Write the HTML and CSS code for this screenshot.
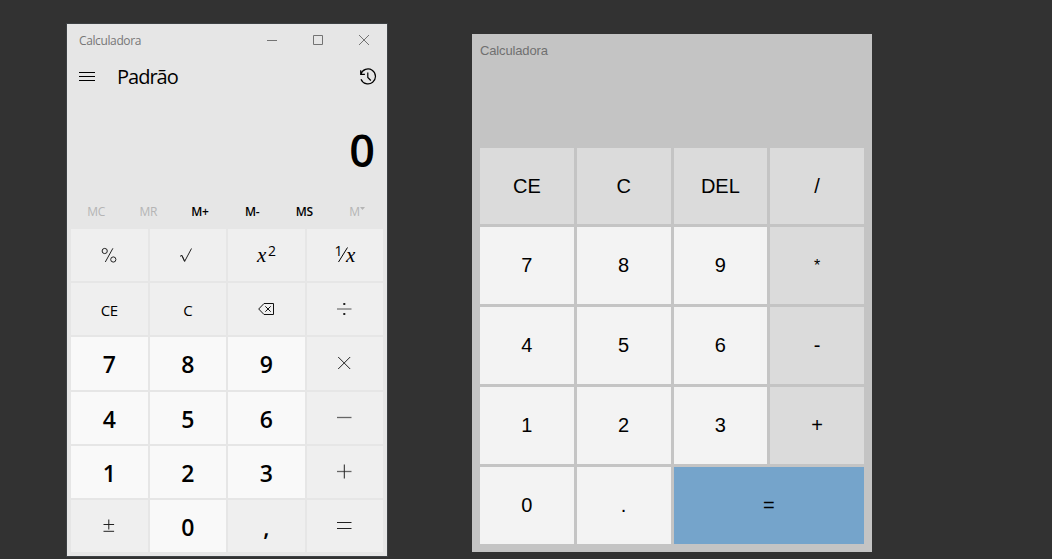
FILE: index.html
```html
<!DOCTYPE html>
<html lang="pt-BR">
<head>
<meta charset="utf-8">
<title>Calculadora</title>
<link rel="stylesheet" href="styles.css">
</head>
<body>
<main class="desktop">
  <section class="win">
    <header class="titlebar">
      <span class="caption">Calculadora</span>
      <div class="controls">
        <svg class="control" viewBox="0 0 46 33"><path d="M18 16.500h10"/></svg>
        <svg class="control" viewBox="0 0 46 33"><path d="M18.500 11.500h9v9h-9z"/></svg>
        <svg class="control" viewBox="0 0 46 33"><path d="M18 11l10 10M28 11l-10 10"/></svg>
      </div>
    </header>
    <div class="mode">
      <svg class="menu" viewBox="0 0 16 10"><path d="M0 .5h16M0 4.500h16M0 8.500h16"/></svg>
      <h1 class="mode-name">Padrão</h1>
      <svg class="history" viewBox="0 0 18 18"><path d="M1.800 6.200A7.500 7.500 0 1 1 2 11.200M1.700 2.200v4.100h4.200M8.800 4.500v5l3 3"/></svg>
    </div>
    <div class="display">0</div>
    <div class="memory">
      <span class="mem off">MC</span><span class="mem off">MR</span><span class="mem">M+</span><span class="mem">M-</span><span class="mem">MS</span><span class="mem off">M<svg class="tick" viewBox="0 0 5 3"><path d="M0 0h5L2.500 3z"/></svg></span>
    </div>
    <div class="pad">
      <div class="key"><svg class="icon" viewBox="0 0 24 24"><circle cx="7.700" cy="7" r="2.600"/><circle cx="16.300" cy="15.500" r="2.600"/><path d="M15.900 4.300L8.300 18"/></svg></div>
      <div class="key"><svg class="icon" viewBox="0 0 24 24"><path d="M5 12.300l2-1 2.700 6L16.500 4.500"/><path d="M6.900 11.800l2.700 5.700"/></svg></div>
      <div class="key"><span class="power"><i class="var">x</i><span class="exp">2</span></span></div>
      <div class="key"><span class="fraction"><span class="one">1</span><svg class="slash" viewBox="0 0 10 16"><path d="M9.500 .5L.5 15"/></svg><i class="var">x</i></span></div>

      <div class="key">CE</div>
      <div class="key">C</div>
      <div class="key"><svg class="icon erase" viewBox="0 0 24 24"><path d="M10 5.500h9.500v11H10L4.700 11z"/><path d="M11.300 8.300l5.400 5.400M16.700 8.300l-5.400 5.400"/></svg></div>
      <div class="key"><svg class="icon" viewBox="0 0 24 24"><path class="mid" d="M5 11h14.500"/><path class="dot" d="M11.300 5h2v2h-2zM11.300 15h2v2h-2z"/></svg></div>

      <div class="key num">7</div><div class="key num">8</div><div class="key num">9</div>
      <div class="key"><svg class="icon" viewBox="0 0 24 24"><path d="M6.200 5l12 12M18.200 5l-12 12"/></svg></div>

      <div class="key num">4</div><div class="key num">5</div><div class="key num">6</div>
      <div class="key"><svg class="icon" viewBox="0 0 24 24"><path class="thick" d="M5 10.500h14.500"/></svg></div>

      <div class="key num">1</div><div class="key num">2</div><div class="key num">3</div>
      <div class="key"><svg class="icon" viewBox="0 0 24 24"><path class="thick" d="M5 10.500h14.500"/><path d="M12.300 3.500v14"/></svg></div>

      <div class="key"><svg class="icon" viewBox="0 0 24 24"><path d="M6.500 9.500h10.600M11.800 4.500v10M6.500 16.300h10.600"/></svg></div>
      <div class="key num">0</div>
      <div class="key comma">,</div>
      <div class="key"><svg class="icon" viewBox="0 0 24 24"><path d="M5 7.500h14.500M5 13.500h14.500"/></svg></div>
    </div>
  </section>

  <section class="flat">
    <h2 class="flat-title">Calculadora</h2>
    <div class="grid">
      <div class="btn op">CE</div><div class="btn op">C</div><div class="btn op">DEL</div><div class="btn op">/</div>
      <div class="btn">7</div><div class="btn">8</div><div class="btn">9</div><div class="btn op star">*</div>
      <div class="btn">4</div><div class="btn">5</div><div class="btn">6</div><div class="btn op">-</div>
      <div class="btn">1</div><div class="btn">2</div><div class="btn">3</div><div class="btn op">+</div>
      <div class="btn">0</div><div class="btn">.</div><div class="btn equals">=</div>
    </div>
  </section>
</main>
</body>
</html>
```

FILE: styles.css
```css
* { box-sizing: border-box; }
body { margin: 0; background: #323232; overflow: hidden; }
svg { display: block; fill: none; stroke: #000; }
.desktop {
  display: flex;
  align-items: flex-start;
  gap: 85px;
  width: 1052px;
  height: 559px;
  padding: 24px 0 0 67px;
}

.win {
  display: flex;
  flex-direction: column;
  width: 320px;
  height: 532px;
  background: #e6e6e6;
  box-shadow: 0 0 0 1px #3d4144;
  font-family: "Open Sans", "Noto Sans", sans-serif;
  color: #000;
}
.titlebar {
  display: flex;
  justify-content: space-between;
  height: 33px;
  padding-left: 12px;
}
.caption { font-size: 12px; line-height: 34px; letter-spacing: -0.38px; color: #777; }
.controls { display: flex; }
.control { width: 46px; height: 33px; stroke: #737373; }
.mode {
  display: flex;
  align-items: center;
  height: 40px;
  padding: 0 10px 0 12px;
}
.menu { width: 16px; height: 10px; margin-bottom: 1px; }
.mode-name {
  margin: 0 auto 0 22px;
  font-size: 20px;
  font-weight: 400;
  line-height: 40px;
  letter-spacing: -1px;
}
.history { width: 18px; height: 18px; margin-bottom: 1px; stroke-width: 1.2; }
.display {
  height: 98px;
  padding: 0 12px 0 0;
  text-align: right;
  font-size: 45px;
  line-height: 106px;
  font-weight: 600;
}
.memory {
  display: grid;
  grid-template-columns: repeat(6, 52.2px);
  height: 34px;
  padding-left: 3px;
}
.mem {
  display: flex;
  justify-content: center;
  padding-right: 1px;
  font-size: 12px;
  line-height: 34px;
  font-weight: 600;
  letter-spacing: -0.3px;
}
.mem.off { padding-right: 0; font-weight: 400; color: #b5b5b5; }
.tick { width: 5px; height: 3px; margin-top: 12px; fill: #b5b5b5; stroke: none; }
.pad {
  flex: 1;
  display: grid;
  grid-template-columns: repeat(4, 1fr);
  grid-template-rows: repeat(6, 1fr);
  gap: 2px;
  padding: 0 4px 4px;
}
.key {
  display: flex;
  align-items: center;
  justify-content: center;
  background: #efefef;
  font-size: 15px;
  letter-spacing: -0.4px;
  padding-top: 2px;
}
.num { background: #f9f9f9; font-size: 23px; font-weight: 600; letter-spacing: 0; }
.comma { font-size: 23px; font-weight: 600; padding-top: 2px; }
.icon { width: 24px; height: 24px; stroke: #222; margin-right: 1px; }
.erase { stroke: #111; }
.mid { stroke: #555; }
.thick { stroke: #666; stroke-width: 1.3; }
.dot { fill: #222; stroke: none; }
.power, .fraction { display: flex; margin-bottom: 2px; }
.var { font: italic 21px/24px "Liberation Serif", serif; }
.exp { margin-left: 2px; font-size: 14px; line-height: 15px; }
.one { font-size: 14px; line-height: 16px; }
.slash { width: 10px; height: 16px; margin: 4px -2px 0 -4px; }

.flat {
  width: 400px;
  height: 518px;
  margin-top: 10px;
  padding: 8px;
  background: #c4c4c4;
  font-family: "Liberation Sans", Arial, sans-serif;
}
.flat-title {
  height: 106px;
  margin: 0;
  font-size: 13px;
  line-height: 17px;
  font-weight: 400;
  letter-spacing: -0.15px;
  color: #707070;
}
.grid {
  display: grid;
  grid-template-columns: repeat(4, 1fr);
  grid-template-rows: 76px repeat(4, 77px);
  gap: 3px;
  height: 396px;
}
.btn {
  display: flex;
  align-items: center;
  justify-content: center;
  background: #f3f3f3;
  color: #000;
  font-size: 20px;
}
.op { background: #dbdbdb; }
.star { font-size: 16px; }
.equals { grid-column: span 2; background: #75a4cb; }
```
